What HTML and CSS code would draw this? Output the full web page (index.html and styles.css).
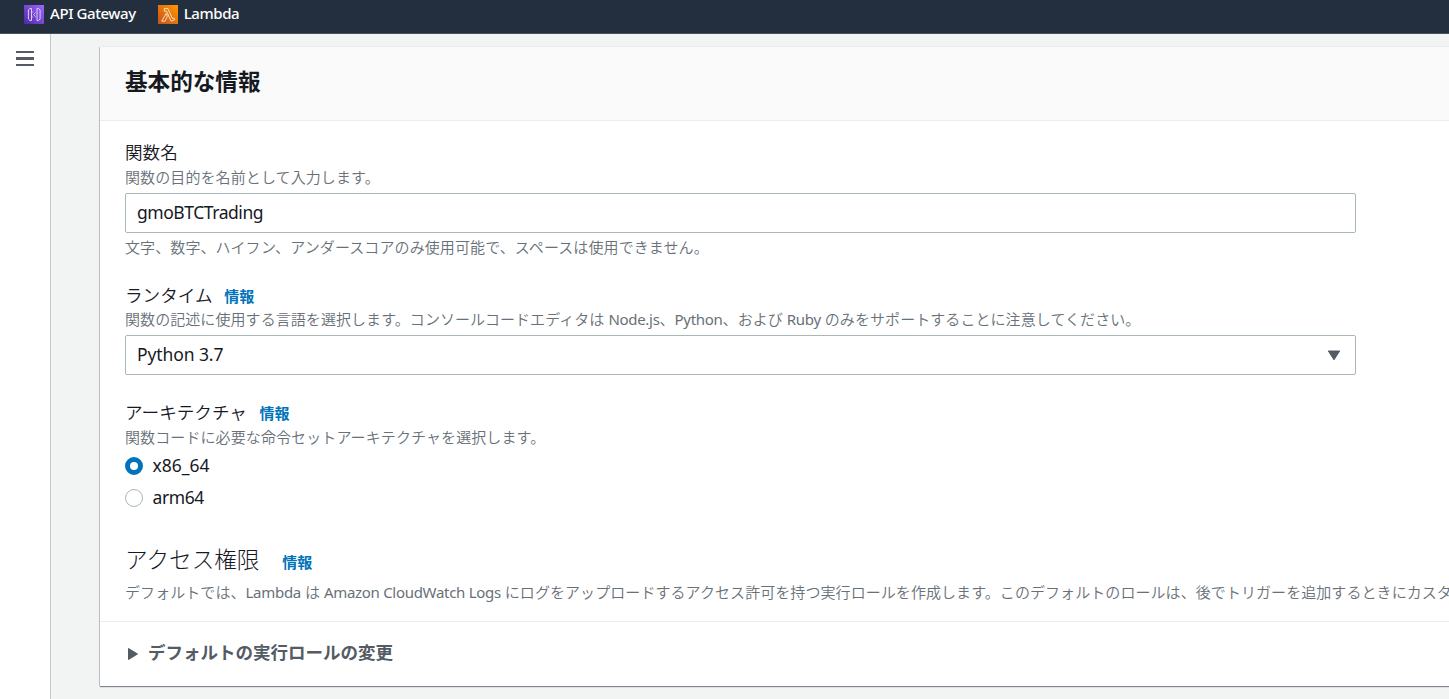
FILE: index.html
```html
<!DOCTYPE html>
<html lang="ja">
<head>
    <meta charset="UTF-8">
    <meta name="viewport" content="width=device-width, initial-scale=1.0">
    <title>関数の作成 - Lambda</title>
    <link rel="stylesheet" href="styles.css">
</head>
<body>
    <div class="navbar">
        <a class="service gateway">
            <svg width="20" height="19" viewBox="0 0 20 19">
                <defs>
                    <linearGradient id="purple" x1="0" y1="1" x2="1" y2="0">
                        <stop offset="0" stop-color="#4d27a8"/>
                        <stop offset="1" stop-color="#a166ff"/>
                    </linearGradient>
                </defs>
                <rect width="20" height="19" fill="url(#purple)"/>
                <g fill="none" stroke="#e6dcfa" stroke-width=".9">
                    <path d="M7.5 3.5H6L4.4 5v9L6 15.6h1.5zM13 3.5h1.5L16.1 5v9l-1.6 1.6H13z"/>
                    <path d="M8.8 6.5v1M8.8 11.5v1M11.7 7.4L9.6 9.6l2.1 2.2" stroke-opacity=".85"/>
                </g>
            </svg>
            <span>API Gateway</span>
        </a>
        <a class="service lambda">
            <svg width="20" height="19" viewBox="0 0 20 19">
                <defs>
                    <linearGradient id="orange" x1="0" y1="1" x2="1" y2="0">
                        <stop offset="0" stop-color="#c8511b"/>
                        <stop offset="1" stop-color="#ff9900"/>
                    </linearGradient>
                </defs>
                <rect width="20" height="19" fill="url(#orange)"/>
                <path d="M6.3 3.6h3.6l4.6 10 1.6-.6.6 1.7-3.5 1.5-4.7-10H6.3zM8.1 8.6l1.3 2.6-2.4 5H3.7z" fill="none" stroke="#fdebd8" stroke-width=".9"/>
            </svg>
            <span>Lambda</span>
        </a>
    </div>

    <div class="layout">
        <div class="sidebar">
            <div class="menu-icon"><span></span><span></span><span></span></div>
        </div>
        <div class="content">
            <div class="card">
                <div class="card-header"><h2>基本的な情報</h2></div>
                <div class="card-body">
                    <div class="field name-field">
                        <label class="label" for="name">関数名</label>
                        <p class="hint">関数の目的を名前として入力します。</p>
                        <input class="control" id="name" type="text" value="gmoBTCTrading">
                        <p class="hint">文字、数字、ハイフン、アンダースコアのみ使用可能で、スペースは使用できません。</p>
                    </div>
                    <div class="field runtime-field">
                        <div class="label">ランタイム <a class="info">情報</a></div>
                        <p class="hint runtime-hint">関数の記述に使用する言語を選択します。コンソールコードエディタは <span class="latin">Node.js</span>、<span class="latin">Python</span>、および <span class="latin">Ruby</span> のみをサポートすることに注意してください。</p>
                        <div class="control select">
                            <span>Python 3.7</span>
                            <svg width="14" height="11" viewBox="0 0 14 11"><path d="M1.3 1h11.4L7 9.8z" fill="#545b64" stroke="#545b64" stroke-linejoin="round"/></svg>
                        </div>
                    </div>
                    <div class="field arch-field">
                        <div class="label">アーキテクチャ <a class="info">情報</a></div>
                        <p class="hint">関数コードに必要な命令セットアーキテクチャを選択します。</p>
                        <label class="option"><input type="radio" name="arch" checked><span>x86_64</span></label>
                        <label class="option arm"><input type="radio" name="arch"><span>arm64</span></label>
                    </div>
                    <div class="access">
                        <h3>アクセス権限 <a class="info">情報</a></h3>
                        <p class="hint access-hint">デフォルトでは、<span class="latin">Lambda</span> は <span class="latin">Amazon CloudWatch Logs</span> にログをアップロードするアクセス許可を持つ実行ロールを作成します。このデフォルトのロールは、後でトリガーを追加するときにカスタ</p>
                    </div>
                </div>
                <div class="expander">
                    <svg width="12" height="14" viewBox="0 0 12 14"><path d="M1.5 1.5v11L10.5 7z" fill="#545b64" stroke="#545b64" stroke-linejoin="round"/></svg>
                    <span>デフォルトの実行ロールの変更</span>
                </div>
            </div>
        </div>
    </div>
</body>
</html>
```
FILE: styles.css
```css
* {
    box-sizing: border-box;
}
body {
    margin: 0;
    height: 100vh;
    overflow: hidden;
    background-color: #f2f3f3;
    color: #16191f;
    font-family: "Noto Sans", "Noto Sans CJK JP", sans-serif;
    font-size: 17.5px;
}
h2, h3, p {
    margin: 0;
}
svg {
    display: block;
    flex: none;
}
.navbar {
    display: flex;
    gap: 22px;
    height: 34px;
    padding: 5px 0 0 24px;
    background-color: #232f3e;
    border-bottom: 1px solid #4b505d;
}
.service {
    display: flex;
    gap: 6px;
    height: 19px;
    color: white;
    font-size: 15px;
    font-weight: 500;
    line-height: 17px;
    letter-spacing: -0.42px;
}
.layout {
    display: flex;
    height: calc(100vh - 34px);
}
.sidebar {
    flex: none;
    width: 51px;
    padding: 17px 0 0 16px;
    background-color: white;
    border-right: 1px solid #c3c8c9;
}
.menu-icon {
    display: flex;
    flex-direction: column;
    gap: 4px;
    width: 18px;
}
.menu-icon span {
    height: 2.4px;
    background-color: #545b64;
}
.content {
    flex: 1;
    min-width: 0;
    padding: 13px 0 0 49px;
}
.card {
    height: 639px;
    background-color: white;
    box-shadow: 0 1px 1px #7b848f, -1px 0 0 #c6cccd, 0 -1px 0 #eaeded;
}
.card-header {
    height: 74px;
    padding: 18px 25px 0;
    background-color: #fafafa;
    border-bottom: 1px solid #eaeded;
}
.card-header h2 {
    font-size: 22.6px;
    font-weight: 700;
    line-height: 34px;
}
.card-body {
    height: 501px;
    padding: 19px 0 0 25px;
    border-bottom: 1px solid #eaeded;
}
.label {
    display: block;
    height: 25px;
    line-height: 24px;
    font-size: 17.6px;
    font-weight: 350;
}
.hint {
    height: 25px;
    color: #687078;
    font-size: 15px;
    font-weight: 350;
    line-height: 24px;
    letter-spacing: 0.1px;
    white-space: nowrap;
}
.runtime-hint {
    line-height: 23px;
    letter-spacing: 0.07px;
}
.access-hint {
    line-height: 25px;
    letter-spacing: 0.07px;
}
.latin {
    font-weight: 400;
    letter-spacing: -0.3px;
}
.info {
    margin-left: 7px;
    color: #0073bb;
    font-size: 15px;
    font-weight: 700;
}
.control {
    display: block;
    width: 1231px;
    height: 40px;
    margin: 3px 0 2px;
    padding: 0 11px 2px;
    border: 1px solid #aab7b8;
    border-radius: 2px;
    background-color: white;
    color: #16191f;
    font: inherit;
    letter-spacing: -0.45px;
}
.select {
    display: flex;
    align-items: center;
    justify-content: space-between;
    padding: 0 14px 0 11px;
    letter-spacing: -0.1px;
}
.select span {
    margin-top: -2px;
}
.name-field {
    height: 143px;
}
.runtime-field {
    height: 117px;
}
.runtime-field .control {
    margin-top: 2px;
}
.arch-field {
    height: 143px;
}
.arch-field .info {
    margin-left: 8px;
}
.option {
    display: flex;
    align-items: center;
    gap: 9.5px;
    height: 32px;
}
.option span {
    margin-top: -2px;
}
.arm span {
    letter-spacing: -0.4px;
}
.option input {
    appearance: none;
    width: 18px;
    height: 18px;
    margin: 0;
    border: 1.5px solid #aab7b8;
    border-radius: 50%;
    background-color: white;
}
.option input:checked {
    border: 5.5px solid #0073bb;
}
.access h3 {
    height: 37px;
    font-size: 22.6px;
    font-weight: 300;
    line-height: 34px;
}
.access .info {
    margin-left: 17px;
}
.expander {
    display: flex;
    align-items: center;
    gap: 9px;
    height: 64px;
    padding-left: 27px;
    color: #545b64;
    font-weight: 700;
}
.expander span {
    margin-top: -5px;
}
```
